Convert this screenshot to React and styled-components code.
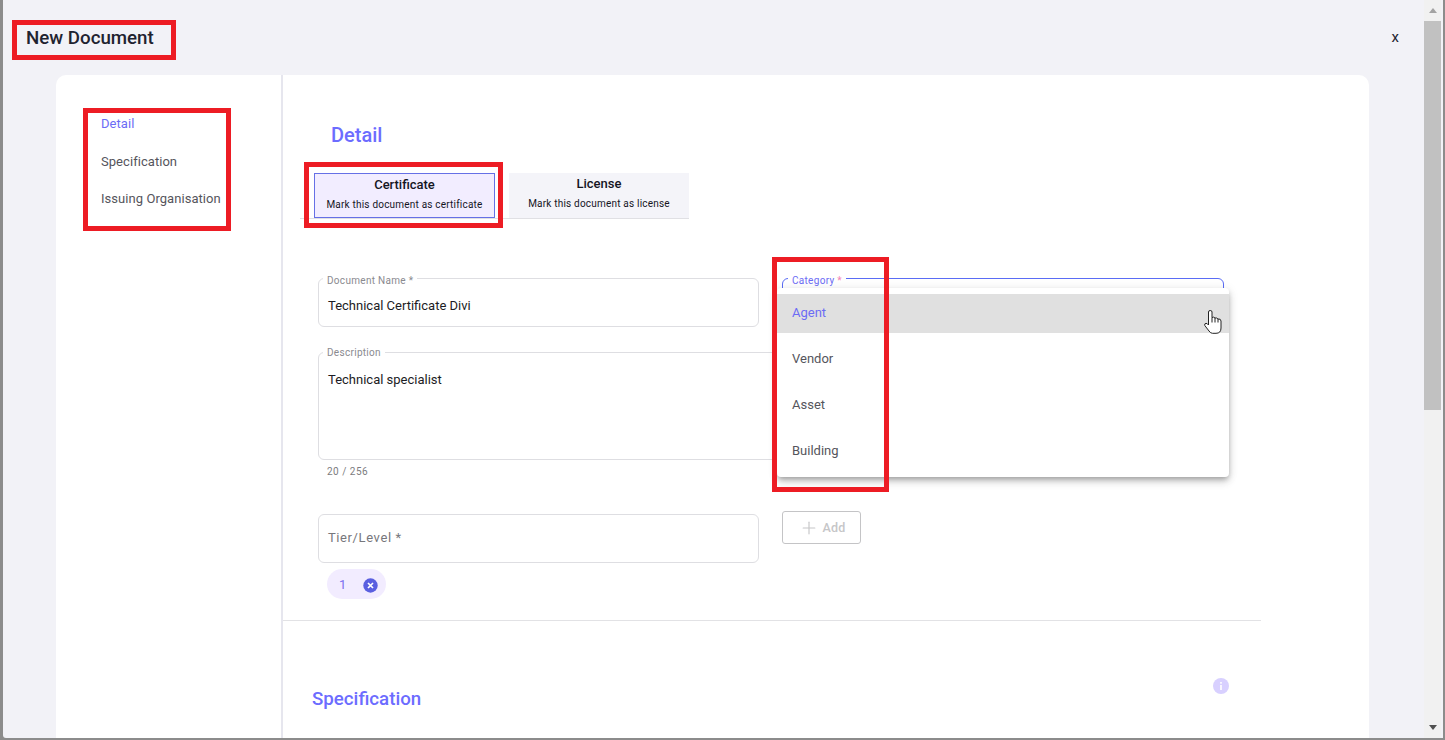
import React from "react";
import styled, { createGlobalStyle } from "styled-components";
import { Plus } from "lucide-react";

const Global = createGlobalStyle`
  html, body { margin: 0; padding: 0; overflow: hidden; }
  body { font-family: Roboto, "Liberation Sans", sans-serif; }
  * { box-sizing: border-box; }
`;

const Screen = styled.div`
  position: relative;
  width: 1445px;
  height: 740px;
  overflow: hidden;
  background: #8c8c8c;
  padding: 0 2px 2px 3px;
`;
const Win = styled.div`
  display: flex;
  height: 738px;
  background: #f2f2f7;
  border-bottom-left-radius: 3px;
  overflow: hidden;
`;
const Content = styled.div`
  flex: 1;
  min-width: 0;
  display: flex;
  flex-direction: column;
`;
const Header = styled.header`
  height: 75px;
  flex: none;
  display: flex;
  align-items: center;
  justify-content: space-between;
  padding: 0 25px 2px 23px;
`;
const Title = styled.h1`
  margin: 2px 0 0;
  font-size: 18.72px;
  font-weight: 500;
  color: #1f2330;
`;
const Close = styled.span`
  font-size: 15px;
  font-weight: 400;
  color: #1f2330;
`;
const Card = styled.div`
  flex: 1;
  min-height: 0;
  margin: 0 55px 0 53px;
  display: flex;
  background: #fff;
  border-radius: 10px 10px 0 0;
  overflow: hidden;
`;
const Side = styled.nav`
  width: 227px;
  flex: none;
  border-right: 2px solid #e6e6ee;
  padding: 40px 0 0 45px;
  display: flex;
  flex-direction: column;
  gap: 19.6px;
`;
const SideItem = styled.a`
  font-size: 13px;
  line-height: 18px;
  letter-spacing: 0.05px;
  color: ${(p) => (p.$active ? "#6c6cf5" : "#55555c")};
`;
const Main = styled.main`
  flex: 1;
  min-width: 0;
`;
const DetailTitle = styled.h2`
  margin: 48px 0 0 48px;
  font-size: 20px;
  line-height: 24px;
  font-weight: 500;
  color: #6c6cff;
`;
const Tabs = styled.div`
  display: flex;
  gap: 14px;
  width: 389px;
  margin: 26px 0 0 17px;
  padding-left: 14px;
  border-bottom: 1px solid #e0e0e4;
`;
const Tab = styled.div`
  width: ${(p) => (p.$active ? "181px" : "180px")};
  height: 45px;
  background: ${(p) => (p.$active ? "#f2edff" : "#f4f4f9")};
  border: ${(p) => (p.$active ? "1px solid #6670e6" : "none")};
  text-align: center;
  color: #15151f;
`;
const TabName = styled.div`
  font-size: 13px;
  font-weight: 500;
  line-height: 16px;
  margin-top: 3px;
`;
const TabHint = styled.div`
  font-size: 10px;
  line-height: 12px;
  margin-top: 6px;
  letter-spacing: 0.2px;
`;
const Form = styled.div`
  display: grid;
  grid-template-columns: 441px 442px;
  column-gap: 23px;
  margin: 59px 0 0 35px;
  width: 906px;
`;
const Field = styled.div`
  position: relative;
  height: ${(p) => p.$h || 49}px;
  grid-column: ${(p) => (p.$wide ? "1 / 3" : "auto")};
  margin-top: ${(p) => p.$top || 0}px;
  border: 1px solid ${(p) => (p.$focus ? "#5a6cf5" : "#dedee2")};
  border-radius: 6px;
  padding: ${(p) => p.$pad || "18px 9px 0"};
  font-size: 13px;
  line-height: 17px;
  color: #1c1c24;
`;
const FloatLabel = styled.label`
  position: absolute;
  top: ${(p) => p.$top ?? -4}px;
  left: ${(p) => (p.$focus ? 5 : 4)}px;
  padding: 0 4px;
  background: #fff;
  font-size: 10px;
  line-height: 12px;
  letter-spacing: 0.3px;
  color: ${(p) => (p.$focus ? "#6c6cf5" : "#8a8a8f")};
`;
const Star = styled.span`
  color: #f582b4;
`;
const Counter = styled.div`
  grid-column: 1 / 3;
  margin: 6px 0 0 9px;
  height: 45px;
  font-size: 10px;
  line-height: 12px;
  letter-spacing: 0.5px;
  color: #7c7c80;
`;
const Placeholder = styled.span`
  letter-spacing: 0.6px;
  color: #77777c;
`;
const AddButton = styled.button`
  width: 79px;
  height: 33px;
  display: flex;
  align-items: center;
  justify-content: center;
  gap: 4px;
  padding: 0 0 0 1px;
  background: #fff;
  border: 1px solid #c4c4c6;
  border-radius: 3px;
  font: 500 12.5px Roboto, sans-serif;
  letter-spacing: 0.2px;
  color: #c6c6c8;
`;
const Chips = styled.div`
  grid-column: 1 / 3;
  margin: 6px 0 0 9px;
`;
const Chip = styled.span`
  display: inline-flex;
  align-items: center;
  gap: 17px;
  width: 59px;
  height: 30px;
  padding-left: 12px;
  border-radius: 15px;
  background: #f2ecff;
  font-size: 13px;
  color: #7d6ff0;
  & > svg { margin-top: 2px; }
`;
const Divider = styled.hr`
  margin: 21px 0 0;
  width: 978px;
  border: none;
  border-top: 1px solid #e2e2e5;
`;
const SpecHead = styled.div`
  display: flex;
  justify-content: space-between;
  align-items: flex-start;
  width: 917px;
  margin: 57px 0 0 29px;
`;
const SpecTitle = styled.h2`
  margin: 9px 0 0;
  font-size: 18.72px;
  line-height: 24px;
  font-weight: 500;
  color: #6c6cff;
`;
const Scroll = styled.div`
  width: 17px;
  margin-right: 2px;
  flex: none;
  display: flex;
  flex-direction: column;
  background: #f1f1f1;
`;
const Arrow = styled.div`
  height: 21px;
  flex: none;
  display: flex;
  align-items: center;
  justify-content: center;
  &::after {
    content: "";
    border-left: 4.5px solid transparent;
    border-right: 4.5px solid transparent;
    ${(p) => (p.$down ? "border-top: 5px solid #505050;" : "border-bottom: 5px solid #a3a3a3;")}
  }
`;
const Thumb = styled.div`
  height: 389px;
  flex: none;
  background: #c1c1c1;
`;
const Track = styled.div`
  flex: 1;
`;
const Menu = styled.ul`
  position: absolute;
  z-index: 2;
  top: 9px;
  left: -6px;
  width: 452px;
  height: 189px;
  margin: 0;
  padding: 6px 0 0;
  list-style: none;
  background: #fff;
  border-radius: 4px;
  box-shadow: 0 3px 5px -1px rgba(0,0,0,.25), 0 5px 8px rgba(0,0,0,.14), 0 1px 12px rgba(0,0,0,.08);
`;
const MenuItem = styled.li`
  height: ${(p) => (p.$active ? 39 : 46)}px;
  margin-bottom: ${(p) => (p.$active ? 2 : 0)}px;
  padding: ${(p) => (p.$active ? "0 0 2px 15px" : "0 0 0 15px")};
  display: flex;
  align-items: center;
  background: ${(p) => (p.$active ? "#e0e0e0" : "transparent")};
  font-size: 13px;
  color: ${(p) => (p.$active ? "#6c6cf5" : "#55555c")};
`;
const Mark = styled.div`
  position: absolute;
  z-index: 3;
  left: ${(p) => p.$x}px;
  top: ${(p) => p.$y}px;
  width: ${(p) => p.$w}px;
  height: ${(p) => p.$h}px;
  border: 5px solid #ed1c24;
  pointer-events: none;
`;
const Hand = styled.svg`
  position: absolute;
  z-index: 4;
  left: 1204px;
  top: 310px;
  width: 18px;
  height: 24px;
`;

const InfoIcon = () => (
  <svg width="16" height="16" viewBox="0 0 16 16">
    <circle cx="8" cy="8" r="8" fill="#d8d0ff" />
    <rect x="7.2" y="7" width="1.6" height="5" fill="#fff" />
    <rect x="7.2" y="4" width="1.6" height="1.7" fill="#fff" />
  </svg>
);
const ChipClose = () => (
  <svg width="15" height="15" viewBox="0 0 15 15">
    <circle cx="7.5" cy="7.5" r="7.2" fill="#5a5fe0" />
    <path d="M5 5l5 5M10 5l-5 5" stroke="#fff" strokeWidth="1.7" />
  </svg>
);

export default function App() {
  return (
    <Screen>
      <Global />
      <Win>
        <Content>
          <Header>
            <Title>New Document</Title>
            <Close>x</Close>
          </Header>
          <Card>
            <Side>
              <SideItem $active>Detail</SideItem>
              <SideItem>Specification</SideItem>
              <SideItem>Issuing Organisation</SideItem>
            </Side>
            <Main>
              <DetailTitle>Detail</DetailTitle>
              <Tabs>
                <Tab $active>
                  <TabName>Certificate</TabName>
                  <TabHint>Mark this document as certificate</TabHint>
                </Tab>
                <Tab>
                  <TabName>License</TabName>
                  <TabHint>Mark this document as license</TabHint>
                </Tab>
              </Tabs>
              <Form>
                <Field>
                  <FloatLabel>Document Name *</FloatLabel>
                  Technical Certificate Divi
                </Field>
                <Field $focus>
                  <FloatLabel $focus>Category <Star>*</Star></FloatLabel>
                  <Menu>
                    <MenuItem $active>Agent</MenuItem>
                    <MenuItem>Vendor</MenuItem>
                    <MenuItem>Asset</MenuItem>
                    <MenuItem>Building</MenuItem>
                  </Menu>
                </Field>
                <Field $wide $h={108} $top={25}>
                  <FloatLabel $top={-6}>Description</FloatLabel>
                  Technical specialist
                </Field>
                <Counter>20 / 256</Counter>
                <Field $top={3} $pad="14px 9px 0">
                  <Placeholder>Tier/Level *</Placeholder>
                </Field>
                <AddButton>
                  <Plus size={20} strokeWidth={1.4} />
                  Add
                </AddButton>
                <Chips>
                  <Chip>1<ChipClose /></Chip>
                </Chips>
              </Form>
              <Divider />
              <SpecHead>
                <SpecTitle>Specification</SpecTitle>
                <InfoIcon />
              </SpecHead>
            </Main>
          </Card>
        </Content>
        <Scroll>
          <Arrow />
          <Thumb />
          <Track />
          <Arrow $down />
        </Scroll>
      </Win>
      <Mark $x={12} $y={20} $w={164} $h={40} />
      <Mark $x={83} $y={108} $w={148} $h={123} />
      <Mark $x={304} $y={162} $w={199} $h={66} />
      <Mark $x={772} $y={257} $w={117} $h={235} />
      <Hand viewBox="0 0 18 24">
        <path
          d="M4.5 15 L4.5 2 Q4.5 .5 6.2 .5 Q8 .5 8 2 L8 7.5 Q9.8 6.5 11 8 Q12.8 7.5 14 9 Q16.8 8.5 17 11 L17 18 Q17 23.3 12 23.3 L8.5 23.3 Q6.5 23.3 5 21 L.8 15.5 Q.2 13.5 2 13.3 Q3.2 13.3 4.5 15 Z"
          fill="#fff"
          stroke="#222"
          strokeWidth="1"
          strokeLinejoin="round"
        />
        <path d="M8 7.5V12.5M11 8V12.5M14 9V12.5" stroke="#222" strokeWidth="1" fill="none" />
      </Hand>
    </Screen>
  );
}
